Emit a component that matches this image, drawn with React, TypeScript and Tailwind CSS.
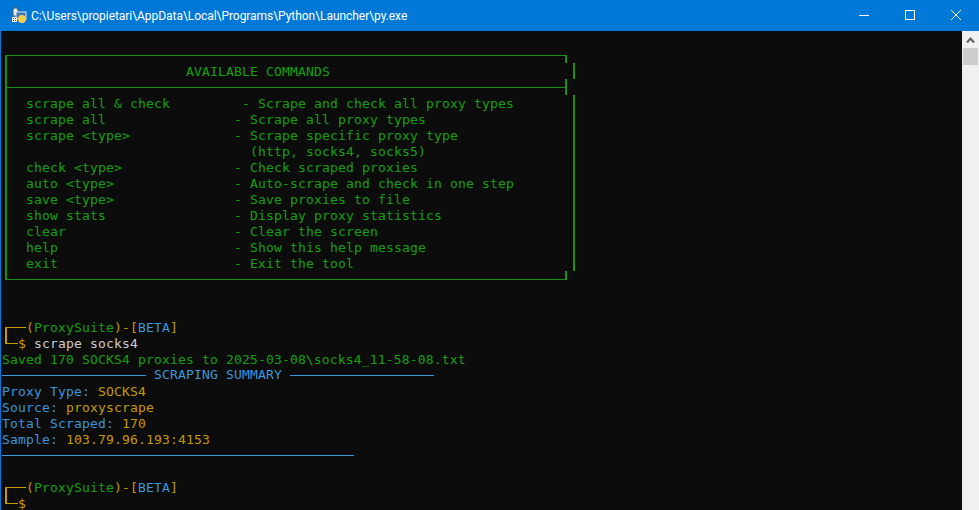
const GREEN = 'text-[#13a10e]';

const commands: [string, string][] = [
  ['scrape all & check', '   - Scrape and check all proxy types'],
  ['scrape all', '  - Scrape all proxy types'],
  ['scrape <type>', '  - Scrape specific proxy type'],
  ['', '    (http, socks4, socks5)'],
  ['check <type>', '  - Check scraped proxies'],
  ['auto <type>', '  - Auto-scrape and check in one step'],
  ['save <type>', '  - Save proxies to file'],
  ['show stats', '  - Display proxy statistics'],
  ['clear', '  - Clear the screen'],
  ['help', '  - Show this help message'],
  ['exit', '  - Exit the tool'],
];

const stats: [string, string][] = [
  ['Proxy Type: ', 'SOCKS4'],
  ['Source: ', 'proxyscrape'],
  ['Total Scraped: ', '170'],
  ['Sample: ', '103.79.96.193:4153'],
];

function Row({ className, children }: { className?: string; children?: React.ReactNode }) {
  return <div className={`h-4 leading-[18px] whitespace-pre ${className ?? ''}`}>{children}</div>;
}

function PythonIcon() {
  return (
    <svg width="17" height="17" viewBox="0 0 17 17" className="shrink-0">
      <path d="M4 1h3l1 2v6H3V3z" fill="#e8e8e8" stroke="#5a5a5a" strokeWidth="1" />
      <rect x="6" y="5" width="10" height="7" fill="#3f78b4" stroke="#d8e4f0" strokeWidth="1" />
      <circle cx="12" cy="12" r="4" fill="#f7cf4a" />
      <path d="M2 10h5v5H2z" fill="#f4f4f4" />
      <path d="M3 11h1v1H3zM5 11h1v1H5zM3 13h1v1H3zM5 13h1v1H5z" fill="#4a4a4a" />
    </svg>
  );
}

function TitleBar() {
  return (
    <div className="h-[31px] shrink-0 flex items-center bg-[#0078d7] pl-[10px] text-white">
      <PythonIcon />
      <span className="ml-1 text-[12px] tracking-[-0.05px] font-['Roboto',sans-serif]">
        C:\Users\propietari\AppData\Local\Programs\Python\Launcher\py.exe
      </span>
      <div className="ml-auto flex h-full">
        <button type="button" aria-label="Minimize" className="w-[46px] pb-px flex items-center justify-center">
          <svg width="10" height="10" viewBox="0 0 10 10">
            <path d="M0 5.5h10" stroke="#fff" strokeWidth="1" />
          </svg>
        </button>
        <button type="button" aria-label="Maximize" className="w-[46px] pb-px flex items-center justify-center">
          <svg width="10" height="10" viewBox="0 0 10 10">
            <rect x="0.5" y="0.5" width="9" height="9" fill="none" stroke="#fff" strokeWidth="1" />
          </svg>
        </button>
        <button type="button" aria-label="Close" className="w-[46px] pb-px flex items-center justify-center">
          <svg width="10" height="10" viewBox="0 0 10 10">
            <path d="M0 0l10 10M10 0L0 10" stroke="#fff" strokeWidth="1" />
          </svg>
        </button>
      </div>
    </div>
  );
}

function CommandBox() {
  return (
    <div className={`relative mt-2 ml-[3px] w-[562px] ${GREEN}`}>
      <div className="h-[33px] pt-[7px] pl-[179px] border-l-2 border-t border-b border-[#1a8f15]">
        <Row>AVAILABLE COMMANDS</Row>
      </div>
      <div className="pt-[7px] pb-[8px] pl-[19px] border-l-2 border-b border-[#1a8f15]">
        {commands.map(([cmd, desc], i) => (
          <Row key={i}>
            <span className="inline-block w-[192px]">{cmd}</span>
            {desc}
          </Row>
        ))}
      </div>
      {/* box glyphs that don't line up, as in the console */}
      <div className="absolute left-[560px] top-0 h-2 w-[2px] bg-[#1a8f15]" />
      <div className="absolute left-[568px] top-2 h-4 w-[2px] bg-[#1a8f15]" />
      <div className="absolute left-[560px] top-6 h-4 w-[2px] bg-[#1a8f15]" />
      <div className="absolute left-[568px] top-10 h-44 w-[2px] bg-[#1a8f15]" />
      <div className="absolute left-[560px] top-[216px] h-2 w-[2px] bg-[#1a8f15]" />
    </div>
  );
}

function Prompt({ command }: { command?: string }) {
  return (
    <div className="relative pl-[24px] text-[#c19c00]">
      <div className="absolute left-[3px] top-2 h-4 w-[2px] bg-[#c19c00]" />
      <div className="absolute left-[3px] top-2 h-px w-[21px] bg-[#c19c00]" />
      <div className="absolute left-[3px] top-6 h-px w-[13px] bg-[#c19c00]" />
      <Row>
        (<span className={GREEN}>ProxySuite</span>)-[<span className="text-[#3a96dd]">BETA</span>]
      </Row>
      <Row className="-ml-2">
        $ <span className="text-[#cccccc]">{command}</span>
      </Row>
    </div>
  );
}

function Scrollbar() {
  return (
    <div className="w-[17px] shrink-0 bg-[#f0f0f0] flex flex-col items-center">
      <svg width="9" height="17" viewBox="0 0 9 17" className="shrink-0">
        <path d="M1 11.5l3.5-4 3.5 4" fill="none" stroke="#606060" strokeWidth="2" />
      </svg>
      <div className="h-[17px] w-[15px] bg-[#cdcdcd]" />
    </div>
  );
}

export default function App() {
  return (
    <div className="w-[979px] h-[510px] overflow-hidden flex flex-col bg-[#0c0c0c]">
      <TitleBar />
      <div className="flex-1 min-h-0 flex border-l border-[#0078d7]">
        <div className="flex-1 min-w-0 pl-px overflow-hidden text-[13px] tracking-[0.17px] font-['DejaVu_Sans_Mono',monospace]">
          <Row />
          <CommandBox />
          <div className="h-[39px]" />
          <Prompt command="scrape socks4" />
          <Row className={GREEN}>Saved 170 SOCKS4 proxies to 2025-03-08\socks4_11-58-08.txt</Row>
          <div className="h-4 flex items-center text-[#3a96dd]">
            <div className="h-px w-[144px] bg-[#3a96dd]" />
            <span className="ml-2 whitespace-pre leading-[18px]">SCRAPING SUMMARY</span>
            <div className="ml-2 h-px w-[144px] bg-[#3a96dd]" />
          </div>
          {stats.map(([label, value]) => (
            <Row key={label} className="text-[#3a96dd]">
              {label}
              <span className="text-[#c19c00]">{value}</span>
            </Row>
          ))}
          <div className="h-4 flex items-center">
            <div className="h-px w-[352px] bg-[#3a96dd]" />
          </div>
          <Row />
          <Prompt />
        </div>
        <Scrollbar />
      </div>
    </div>
  );
}
